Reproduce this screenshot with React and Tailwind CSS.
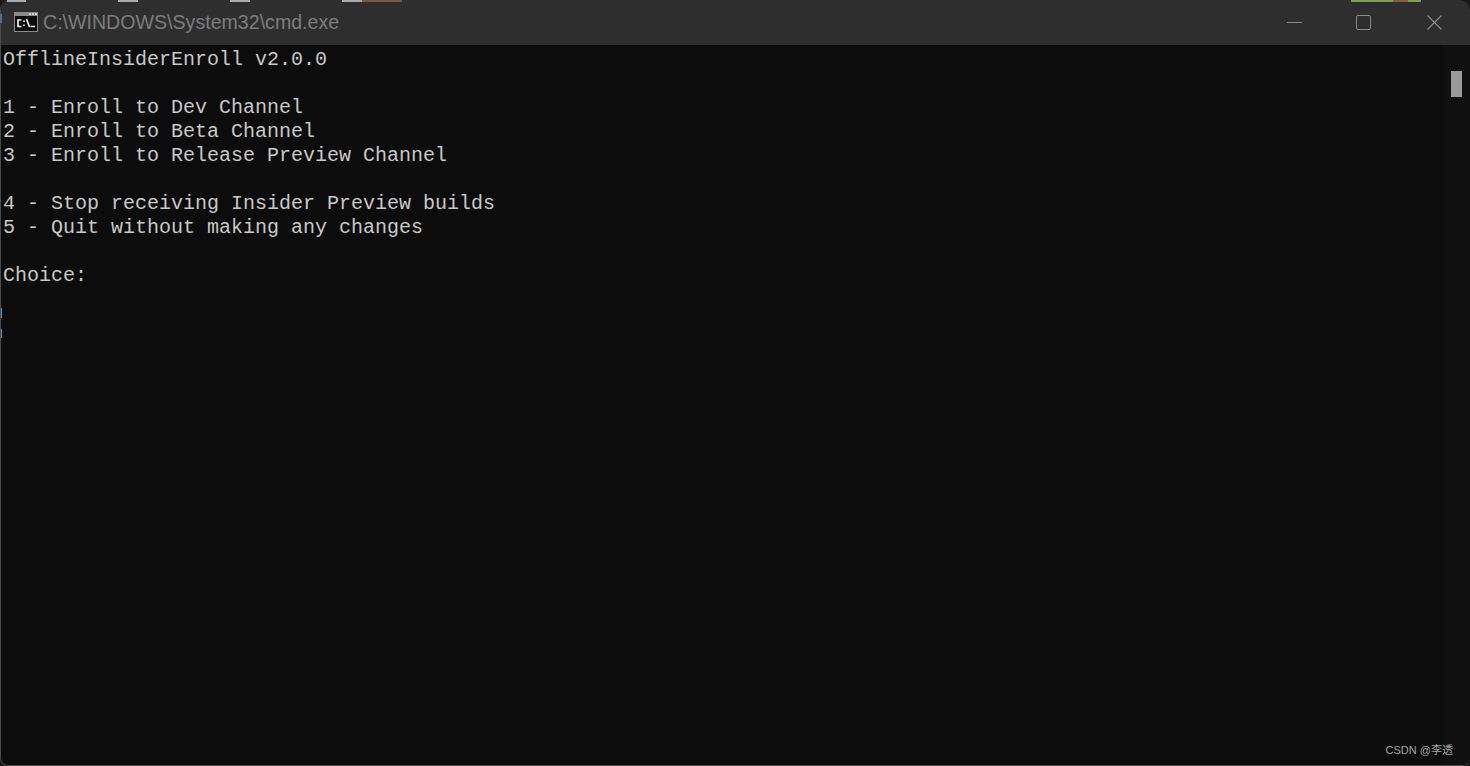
import React from "react";

const lines = [
  "OfflineInsiderEnroll v2.0.0",
  "",
  "1 - Enroll to Dev Channel",
  "2 - Enroll to Beta Channel",
  "3 - Enroll to Release Preview Channel",
  "",
  "4 - Stop receiving Insider Preview builds",
  "5 - Quit without making any changes",
  "",
  "Choice:",
];

const CmdIcon = () => (
  <svg width="24" height="20" viewBox="0 0 24 20" className="shrink-0">
    <rect x="0" y="0" width="24" height="20" fill="#8a8a8a" />
    <rect x="1" y="4" width="22" height="15" fill="#0c0c0c" />
    <rect x="15" y="1" width="2" height="2" fill="#d0d0d0" />
    <rect x="18" y="1" width="2" height="2" fill="#d0d0d0" />
    <rect x="21" y="1" width="2" height="2" fill="#d0d0d0" />
    <path d="M7.5 8H4V14.5H7.5M10 8.5V10M10 12.5V14M12.5 7L15.5 15M16.5 14.5H21" fill="none" stroke="#f0f0f0" strokeWidth="1.7" />
  </svg>
);

const App = () => {
  return (
    <div className="relative w-[1470px] h-[766px] overflow-hidden bg-[#161616]">
      {/* bits of the desktop showing above the window */}
      <div className="absolute top-0 left-[7px] w-[19px] h-[2px] bg-[#a9a9ad]" />
      <div className="absolute top-0 left-[118px] w-[20px] h-[2px] bg-[#a9a9ad]" />
      <div className="absolute top-0 left-[230px] w-[20px] h-[2px] bg-[#a9a9ad]" />
      <div className="absolute top-0 left-[342px] w-[20px] h-[2px] bg-[#a9a9ad]" />
      <div className="absolute top-0 left-[362px] w-[40px] h-[2px] bg-[#7a5a42]" />
      <div className="absolute top-0 left-[1351px] w-[70px] h-[2px] bg-[#7da04a]" />
      <div className="absolute top-0 left-[1393px] w-[15px] h-[2px] bg-[#8d5a3c]" />

      <div className="flex flex-col h-full rounded-t-[10px] rounded-b-[8px] overflow-hidden bg-[#0c0c0c] border-l border-b border-[#4a4a4a]">
        {/* title bar */}
        <div className="flex items-center h-[45px] shrink-0 bg-[#2e2e2e]">
          <div className="flex items-center gap-[5px] pl-[13px] flex-1">
            <CmdIcon />
            <span className="text-[19.6px] text-[#7d7d7d] font-['Liberation_Sans',sans-serif]">
              C:\WINDOWS\System32\cmd.exe
            </span>
          </div>
          <div className="flex items-center">
            <div className="w-[67px] flex justify-center">
              <div className="w-[15px] h-px bg-[#8b8b8b]" />
            </div>
            <div className="w-[71px] flex justify-center">
              <div className="w-[15px] h-[15px] rounded-[2px] border border-[#8b8b8b]" />
            </div>
            <div className="w-[71px] flex justify-center">
              <svg width="15" height="15" viewBox="0 0 15 15">
                <path d="M0.5 0.5L14.5 14.5M14.5 0.5L0.5 14.5" stroke="#8b8b8b" strokeWidth="1.2" />
              </svg>
            </div>
          </div>
        </div>

        {/* console body */}
        <div className="flex flex-1 min-h-0">
          <div className="flex-1 pl-[2px] pt-[3px] text-[20px] leading-[24px] text-[#c8c8c8] font-['Liberation_Mono',monospace] whitespace-pre">
            {lines.map((line, i) => (
              <div key={i} className="h-[24px]">
                {line}
              </div>
            ))}
          </div>
          <div className="w-[27px] shrink-0 pt-[26px] pl-[8px] bg-[#101010]">
            <div className="w-[11px] h-[26px] bg-[#9a9a9a]" />
          </div>
        </div>
      </div>

      {/* stray marks on the window's left edge */}
      <div className="absolute left-0 top-[14px] w-[2px] h-[9px] bg-[#4f6f8f]" />
      <div className="absolute left-[1px] top-[308px] w-px h-[10px] bg-[#5b8fc0]" />
      <div className="absolute left-[1px] top-[329px] w-px h-[9px] bg-[#5b8fc0]" />

      {/* watermark */}
      <div className="absolute right-[17px] bottom-[8px] text-[11px] leading-[15px] text-[#a6a6a6] font-['Liberation_Sans','Noto_Sans_CJK_SC',sans-serif]">
        CSDN @李透
      </div>
    </div>
  );
};

export default App;
